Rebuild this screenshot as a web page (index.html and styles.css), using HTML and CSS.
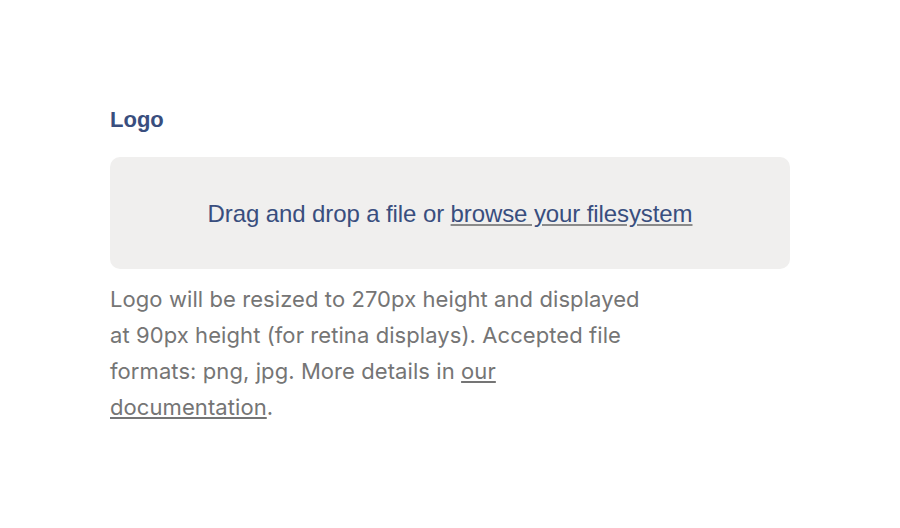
FILE: index.html
```html
<!DOCTYPE html>
<html lang="en">
<head>
  <meta charset="UTF-8">
  <meta name="viewport" content="width=device-width, initial-scale=1.0">
  <title>Logo upload</title>
  <link rel="stylesheet" href="styles.css">
</head>
<body>
  <div class="field">
    <h2 class="field-label">Logo</h2>
    <div class="dropzone">
      <p>Drag and drop a file or <a href="#">browse your filesystem</a></p>
    </div>
    <p class="help">Logo will be resized to 270px height and displayed at 90px height (for retina displays). Accepted file formats: png, jpg. More details in <a href="#">our documentation</a>.</p>
  </div>
</body>
</html>
```

FILE: styles.css
```css
body {
  margin: 0;
  padding: 0;
  background-color: #fff;
  font-family: 'Liberation Sans', Arial, sans-serif;
}
.field {
  width: 680px;
  margin: 0 auto;
  padding-top: 105px;
}
.field-label {
  margin: 0 0 22px;
  font-size: 22px;
  line-height: 30px;
  font-weight: bold;
  color: #394e7e;
}
.dropzone {
  background-color: #f0efee;
  border-radius: 10px;
  height: 112px;
  display: flex;
  align-items: center;
  justify-content: center;
}
.dropzone p {
  margin: 2px 0 0;
  font-size: 24px;
  letter-spacing: -0.1px;
  color: #394e7e;
}
.dropzone a {
  color: #394e7e;
  text-decoration-color: #8a8a8a;
}
.help {
  max-width: 550px;
  margin: 12px 0 0;
  font-family: Inter, 'Noto Sans', sans-serif;
  font-size: 22px;
  line-height: 36px;
  letter-spacing: 0.08px;
  color: #757575;
}
.help a {
  color: #757575;
}
```
